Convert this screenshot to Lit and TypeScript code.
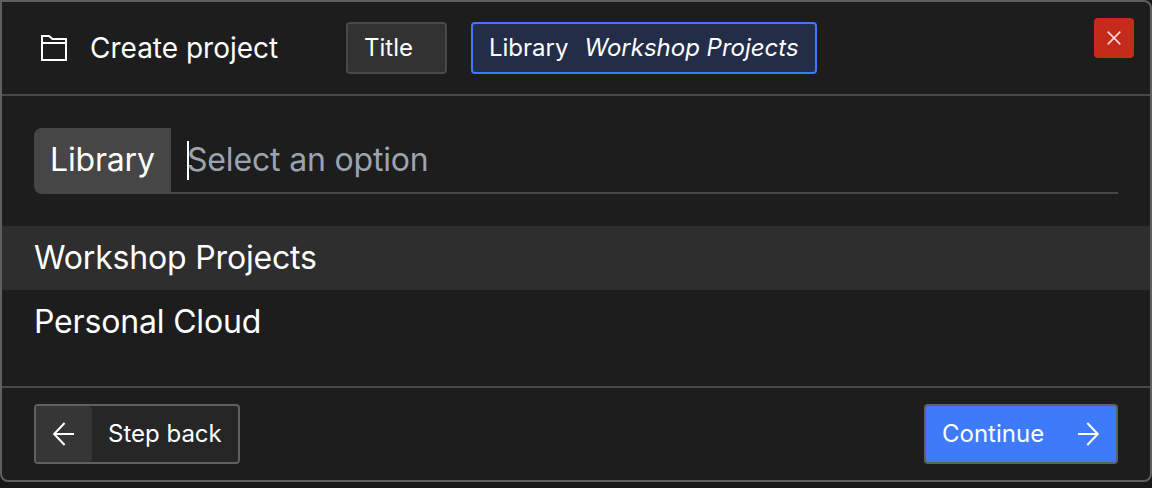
import { LitElement, html, css, svg } from 'lit';
import { customElement, state } from 'lit/decorators.js';

interface Step {
  name: string;
  value: string;
}

const folderIcon = svg`
  <path d="M1 1H8L11.5 4H25V25H1Z M1 8H25" />
`;
const closeIcon = svg`<path d="M0.7 0.7L13.3 13.3M13.3 0.7L0.7 13.3" />`;
const backIcon = svg`<path d="M21 12H1.2M11.6 1L1.1 12L11.6 23" />`;
const nextIcon = svg`<path d="M0 12H19.8M9.3 1L19.8 12L9.3 23" />`;

@customElement('app-root')
export class AppRoot extends LitElement {
  static styles = css`
    :host {
      display: block;
      height: 488px;
      overflow: hidden;
      background: #181818;
      color: #ffffff;
      font-family: Inter, "Liberation Sans", sans-serif;
    }
    * { box-sizing: border-box; }
    svg {
      display: block;
      fill: none;
      stroke: currentColor;
      stroke-width: 2;
    }
    button {
      margin: 0;
      padding: 0;
      font: inherit;
      color: inherit;
      cursor: pointer;
    }
    .dialog {
      display: flex;
      flex-direction: column;
      height: 482px;
      border: 2px solid #606060;
      border-radius: 0 8px 8px 8px;
      background: #1d1d1d;
      overflow: hidden;
    }
    .header {
      display: flex;
      align-items: flex-start;
      height: 94px;
      padding: 16px 16px 0 39px;
      border-bottom: 2px solid #484848;
    }
    .heading {
      display: flex;
      align-items: center;
      gap: 23px;
      height: 60px;
      width: 305px;
      font-size: 28px;
      white-space: nowrap;
    }
    .steps {
      display: flex;
      flex: 1;
      gap: 24px;
      padding-top: 4px;
    }
    .step {
      display: flex;
      align-items: center;
      gap: 16px;
      height: 52px;
      padding: 0 16px 1px;
      border: 2px solid #484848;
      border-radius: 4px;
      background: #323232;
      font-size: 24px;
      white-space: nowrap;
    }
    .step.active {
      border-color: #3d7afb;
      background: #232d47;
    }
    .close {
      display: flex;
      align-items: center;
      justify-content: center;
      width: 40px;
      height: 40px;
      border: none;
      border-radius: 4px;
      background: #c42b1a;
      color: #fbd0d6;
    }
    .close svg { stroke-width: 1.7; }
    .field {
      display: flex;
      height: 66px;
      margin: 32px;
      font-size: 32px;
      letter-spacing: -0.17px;
    }
    .label {
      display: flex;
      align-items: center;
      width: 137px;
      padding: 0 0 3px 16px;
      border-radius: 8px 0 0 8px;
      background: #464646;
    }
    .entry {
      display: flex;
      flex: 1;
      align-items: center;
      padding-left: 16px;
      border-bottom: 2px solid #464646;
      color: #9ca3af;
    }
    .placeholder { padding-bottom: 1px; }
    .caret {
      width: 2px;
      height: 39px;
      margin-right: -2px;
      background: #ffffff;
    }
    .option {
      display: flex;
      align-items: center;
      height: 64px;
      padding: 0 32px 1px;
      font-size: 32px;
      letter-spacing: -0.17px;
    }
    .option.selected { background: #2e2e2e; }
    .footer {
      display: flex;
      justify-content: space-between;
      margin-top: auto;
      padding: 16px 32px;
      border-top: 2px solid #484848;
      font-size: 24px;
    }
    .action {
      display: flex;
      align-items: center;
      height: 60px;
      border: 2px solid #606060;
      border-radius: 4px;
      background: #262626;
    }
    .action-text { padding-bottom: 2px; }
    .back { width: 206px; }
    .back-icon {
      display: flex;
      align-items: center;
      justify-content: center;
      width: 56px;
      height: 56px;
      margin-right: 16px;
      border-radius: 0 4px 4px 0;
      background: #363636;
    }
    .continue {
      justify-content: space-between;
      width: 194px;
      padding: 0 16px;
      background: #3e7bfa;
    }
  `;

  @state() private steps: Step[] = [
    { name: 'Title', value: '' },
    { name: 'Library', value: 'Workshop Projects' },
  ];
  @state() private current = 1;
  @state() private options = ['Workshop Projects', 'Personal Cloud'];
  @state() private selected = 0;

  render() {
    return html`
      <div class="dialog">
        <div class="header">
          <div class="heading">
            <svg width="26" height="26" viewBox="0 0 26 26">${folderIcon}</svg>
            <span>Create project</span>
          </div>
          <div class="steps">
            ${this.steps.map((step, i) => this.renderStep(step, i))}
          </div>
          <button class="close" aria-label="Close">
            <svg width="14" height="14" viewBox="0 0 14 14">${closeIcon}</svg>
          </button>
        </div>
        <div class="field">
          <div class="label"><span>${this.steps[this.current].name}</span></div>
          <div class="entry">
            <div class="caret"></div>
            <span class="placeholder">Select an option</span>
          </div>
        </div>
        <div class="options">
          ${this.options.map((option, i) => html`
            <div
              class="option ${i === this.selected ? 'selected' : ''}"
              @click=${() => this.onSelect(i)}
            ><span>${option}</span></div>
          `)}
        </div>
        <div class="footer">
          <button class="action back">
            <span class="back-icon">
              <svg width="22" height="24" viewBox="0 0 22 24">${backIcon}</svg>
            </span>
            <span class="action-text">Step back</span>
          </button>
          <button class="action continue">
            <span class="action-text">Continue</span>
            <svg width="22" height="24" viewBox="0 0 22 24">${nextIcon}</svg>
          </button>
        </div>
      </div>
    `;
  }

  private renderStep(step: Step, i: number) {
    return html`
      <div class="step ${i === this.current ? 'active' : ''}">
        <span>${step.name}</span>
        <em>${step.value}</em>
      </div>
    `;
  }

  private onSelect(i: number) {
    this.selected = i;
    this.steps = this.steps.map((step, n) =>
      n === this.current ? { ...step, value: this.options[i] } : step);
  }
}
